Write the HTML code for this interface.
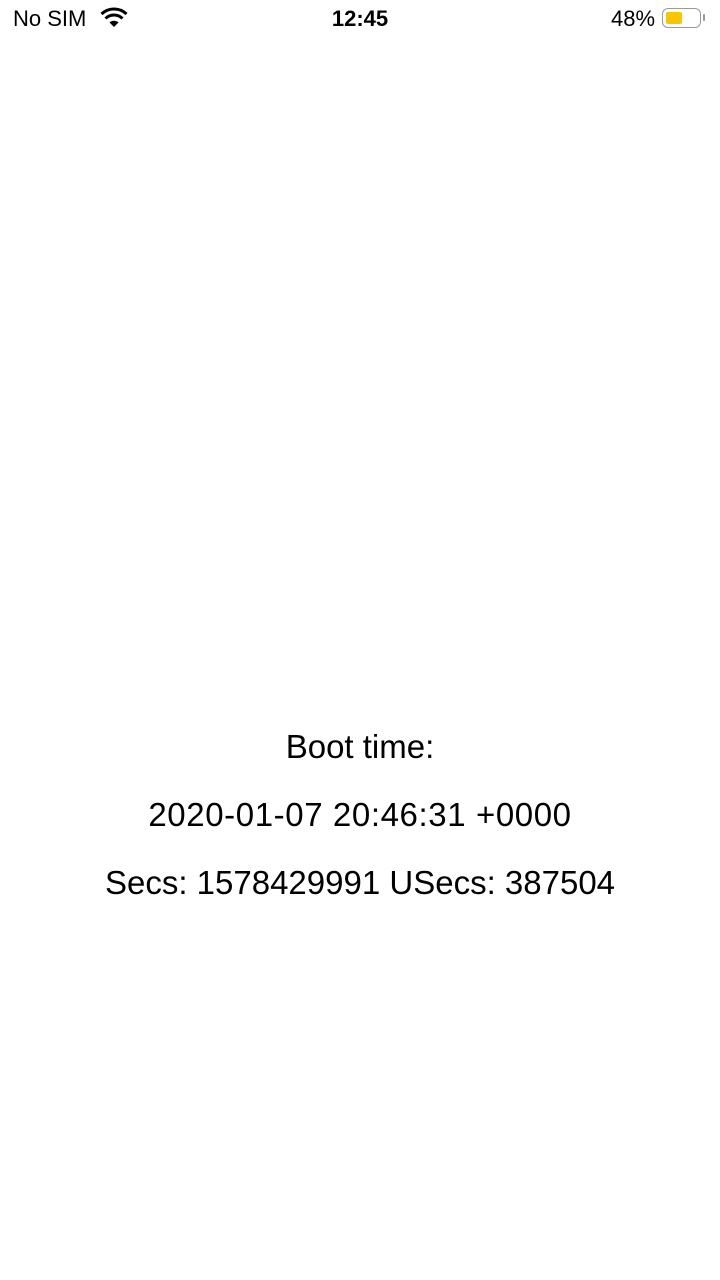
<!DOCTYPE html>
<html><head><style>
body{margin:0;width:720px;height:1280px;background:#fff;font-family:"Liberation Sans",sans-serif;color:#000;position:relative;overflow:hidden}
.t{position:absolute;left:0;width:720px;text-align:center;font-size:33px;line-height:36px}
</style></head><body>
<div style="position:absolute;left:13px;top:6px;font-size:22px">No SIM</div>
<svg style="position:absolute;left:99px;top:7px" width="30" height="22" viewBox="0 0 30 22">
<path d="M15 20 L10.5 15.5 A6.5 6.5 0 0 1 19.5 15.5 Z" fill="#000"/>
<path d="M6.5 11.5 A12 12 0 0 1 23.5 11.5" stroke="#000" stroke-width="3" fill="none"/>
<path d="M2.5 7 A18 18 0 0 1 27.5 7" stroke="#000" stroke-width="3" fill="none"/>
</svg>
<div style="position:absolute;left:0;width:720px;text-align:center;top:6px;font-size:22px;font-weight:bold">12:45</div>
<div style="position:absolute;left:611px;top:6px;font-size:22px">48%</div>
<div style="position:absolute;left:662px;top:8px;width:39px;height:20px;border:1.5px solid #999;border-radius:6px;box-sizing:border-box"></div>
<div style="position:absolute;left:666px;top:12px;width:16px;height:12px;background:#f7c600;border-radius:2px"></div>
<div style="position:absolute;left:703px;top:14px;width:2px;height:7px;background:#999;border-radius:1px"></div>
<div class="t" style="top:729px">Boot time:</div>
<div class="t" style="top:797px;letter-spacing:0.6px">2020-01-07 20:46:31 +0000</div>
<div class="t" style="top:865px">Secs: 1578429991 USecs: 387504</div>
</body></html>
